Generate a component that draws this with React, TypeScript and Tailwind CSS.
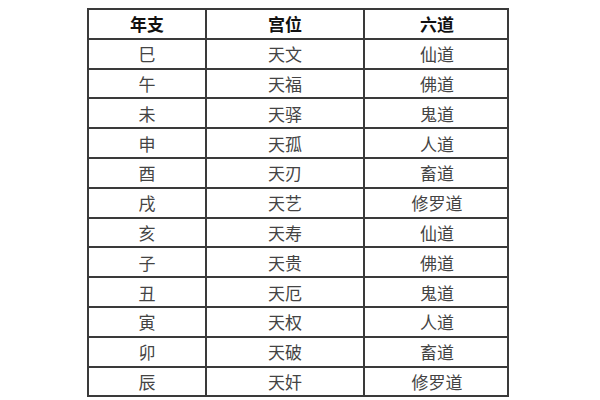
import React from 'react';

const rows: [string, string, string][] = [
  ['巳', '天文', '仙道'],
  ['午', '天福', '佛道'],
  ['未', '天驿', '鬼道'],
  ['申', '天孤', '人道'],
  ['酉', '天刃', '畜道'],
  ['戌', '天艺', '修罗道'],
  ['亥', '天寿', '仙道'],
  ['子', '天贵', '佛道'],
  ['丑', '天厄', '鬼道'],
  ['寅', '天权', '人道'],
  ['卯', '天破', '畜道'],
  ['辰', '天奸', '修罗道'],
];

function Row({ cells, header }: { cells: string[]; header?: boolean }) {
  return (
    <div className="grid grid-cols-[118px_158px_144px] h-[29.8px]">
      {cells.map((c, i) => (
        <div
          key={i}
          className={`flex items-center justify-center border-b-2 border-[#3a3a3a] ${i < 2 ? 'border-r-2' : ''} ${
            header ? 'font-bold text-[#111]' : 'text-[#444]'
          }`}
        >
          {c}
        </div>
      ))}
    </div>
  );
}

function App() {
  return (
    <div
      className="w-[600px] h-[400px] bg-white pt-[8px] pl-[87px] text-[17px] leading-none"
      style={{ fontFamily: '"Noto Sans CJK SC", "Liberation Sans", sans-serif' }}
    >
      <div className="w-[422px] border-2 border-b-0 border-[#3a3a3a]">
        <Row cells={['年支', '宫位', '六道']} header />
        {rows.map((r, i) => (
          <Row key={i} cells={r} />
        ))}
      </div>
    </div>
  );
}

export default App;
